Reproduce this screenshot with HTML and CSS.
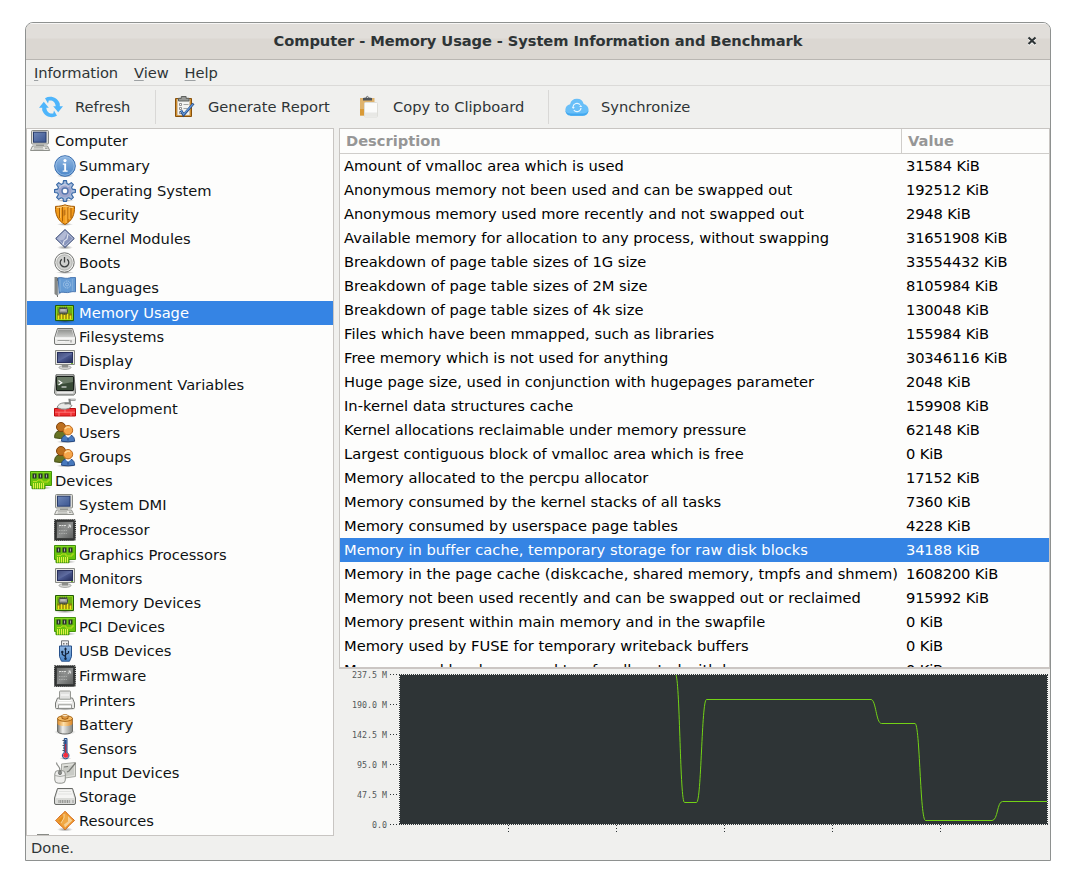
FILE: index.html
```html
<!DOCTYPE html>
<html lang="en">
<head>
<meta charset="utf-8">
<title>Computer - Memory Usage - System Information and Benchmark</title>
<link rel="stylesheet" href="styles.css">
</head>
<body>
<svg class="defs" width="0" height="0" aria-hidden="true">
<defs>
<linearGradient id="gScreen" x1="0" y1="0" x2="1" y2="1"><stop offset="0" stop-color="#7088b8"/><stop offset="1" stop-color="#3a5590"/></linearGradient>
<linearGradient id="gDark" x1="0" y1="0" x2="1" y2="1"><stop offset="0" stop-color="#262f60"/><stop offset=".5" stop-color="#4c5a92"/><stop offset="1" stop-color="#222b58"/></linearGradient>
<linearGradient id="gBlue" x1="0" y1="0" x2="0" y2="1"><stop offset="0" stop-color="#92b8e2"/><stop offset="1" stop-color="#4a86c8"/></linearGradient>
<linearGradient id="gDrive" x1="0" y1="0" x2="0" y2="1"><stop offset="0" stop-color="#8f918e"/><stop offset="1" stop-color="#d0d1cf"/></linearGradient>
<linearGradient id="gChip" x1="0" y1="0" x2="1" y2="1"><stop offset="0" stop-color="#6a6c6b"/><stop offset=".5" stop-color="#8b8d8c"/><stop offset="1" stop-color="#5c5e5d"/></linearGradient>
<linearGradient id="gBat" x1="0" y1="0" x2="1" y2="0"><stop offset="0" stop-color="#7b7d7a"/><stop offset=".35" stop-color="#efefed"/><stop offset="1" stop-color="#858783"/></linearGradient>
<linearGradient id="gOr" x1="0" y1="0" x2="1" y2="0"><stop offset="0" stop-color="#db8b2a"/><stop offset=".4" stop-color="#ffe0a8"/><stop offset="1" stop-color="#d98422"/></linearGradient>
<radialGradient id="gShade"><stop offset="0" stop-color="#000" stop-opacity=".4"/><stop offset="1" stop-color="#000" stop-opacity="0"/></radialGradient>

<symbol id="computer" viewBox="0 0 22 22">
<rect x="1.500" y=".5" width="17" height="13.500" rx="1" fill="#dcdcd6" stroke="#888a85"/>
<rect x="3.500" y="2.200" width="12.500" height="10" fill="url(#gScreen)" stroke="#283c6c"/>
<path d="M6 14.500h8v2H6z" fill="#9a9b96"/>
<path d="M2.500 16h15l2.200 4.500H.5z" fill="#e8e8e4" stroke="#8f918c"/>
<path d="M4 17.700h9M3.500 19.200h10" stroke="#a3a59f" stroke-width=".8"/><path d="M15 18.200h2.500" stroke="#888a85"/>
</symbol>
<symbol id="summary" viewBox="0 0 22 22">
<ellipse cx="11" cy="20.900" rx="9" ry="1.200" fill="url(#gShade)"/>
<circle cx="11" cy="11" r="10.300" fill="url(#gBlue)" stroke="#3b6eae"/><circle cx="11" cy="11" r="9.200" fill="none" stroke="#9dc1e7" stroke-width=".8"/>
<circle cx="11" cy="5.600" r="1.600" fill="#fff"/><path d="M8.800 8.400h3.300v7h1.500v1.400H8.700v-1.400h1.500V9.800H8.800z" fill="#fff"/>
</symbol>
<symbol id="os" viewBox="0 0 22 22">
<ellipse cx="11" cy="20.600" rx="9" ry="1.400" fill="url(#gShade)"/>
<path d="M9.500.6h3l.5 3 1.800.8 2.500-1.800 2.100 2.100-1.800 2.500.7 1.900 3.100.5v2.900l-3.100.5-.7 1.800 1.800 2.600-2.100 2-2.500-1.700-1.800.7-.5 3h-3l-.5-3-1.800-.7-2.500 1.700-2.100-2 1.800-2.600-.7-1.800-3.100-.5V9.600l3.100-.5.7-1.900-1.800-2.500 2.100-2.100 2.500 1.800L9 3.600z" fill="#a3b8da" stroke="#3465a4" stroke-width="1.100" stroke-linejoin="round"/>
<circle cx="11" cy="11" r="6.300" fill="#9fa6cd"/><circle cx="11" cy="11" r="3" fill="#fff" stroke="#5576ad" stroke-width="1.400"/><path d="M5.500 8c2-3.500 7-4.500 9-1" fill="none" stroke="#d6dbea"/>
</symbol>
<symbol id="security" viewBox="0 0 22 22">
<ellipse cx="11" cy="20.400" rx="8" ry="1.500" fill="url(#gShade)"/>
<path d="M1.500 2.400C6 2.400 9 1.500 11 .8c2 .7 5 1.600 9.500 1.600.3 8-2 14-9.500 18.100C3.500 16.400 1.200 10.400 1.500 2.400z" fill="#f39c1c" stroke="#a35a05"/>
<path d="M2.800 3.500c4 0 6.200-.7 8.200-1.400 2 .7 4.200 1.400 8.200 1.400" fill="none" stroke="#fdd58c"/>
<path d="M5.500 4v10M8.500 3v14.500M14 3v15M17 4v10" stroke="#a35a05" stroke-width=".9"/><path d="M6.500 4v10M12 3v16M15 4v11" stroke="#ffc15c" stroke-width=".8"/>
<path d="M9.500 6.500l2-1v5l-2 2z" fill="#a45c12" opacity=".6"/>
</symbol>
<symbol id="kernel" viewBox="0 0 22 22">
<ellipse cx="11" cy="19.500" rx="8" ry="2" fill="url(#gShade)"/>
<path d="M11 1.500l9.300 9-9.300 9-9.300-9z" fill="#8894bb" stroke="#3f4f78"/><path d="M11 3l7.800 7.500L11 18l-7.800-7.500z" fill="none" stroke="#bdc6df" stroke-width=".8"/>
<path d="M4 10.500L11 3.500l2 2-3 6-4 1z" fill="#c5cbe0" opacity=".7"/><path d="M14 6l-1 5-3 2-1 4" fill="none" stroke="#dfe3ef" stroke-width="1.200"/>
</symbol>
<symbol id="boots" viewBox="0 0 22 22">
<ellipse cx="11" cy="20.500" rx="9" ry="1.400" fill="url(#gShade)"/>
<circle cx="10.500" cy="10.500" r="9.700" fill="#f3f3f2" stroke="#6f716e"/><circle cx="10.500" cy="10.500" r="7.700" fill="#cfd0ce" stroke="#aeb0ac"/>
<path d="M7.800 7.200a4.300 4.300 0 1 0 5.400 0M10.500 5v5.500" fill="none" stroke="#3d4040" stroke-width="1.300"/>
</symbol>
<symbol id="languages" viewBox="0 0 22 22">
<path d="M.5 0h3v19L.5 17z" fill="#858784"/><path d="M3.500 1v19" stroke="#4b4e4d" stroke-width=".8"/><path d="M3.500 4v14.500l3-2V3z" fill="#b9c4d0"/>
<path d="M4 .9c4-1.200 6 .9 9.500.4 3-.4 4-1.600 8-.8v14.300c-4-.7-5 .7-8 .8-3.500.1-5.500-1.200-8 .5z" fill="#659bd4" stroke="#3465a4" stroke-width=".8"/>
<circle cx="13" cy="7.500" r="3.500" fill="none" stroke="#a7c8eb" stroke-width="1" stroke-dasharray="1.500 .6"/><circle cx="13" cy="7.500" r="1.500" fill="none" stroke="#a7c8eb" stroke-width=".8"/><path d="M6 2.500v12M18.500 2v12" stroke="#91b8e0" stroke-width="1.400" opacity=".6"/>
</symbol>
<symbol id="memory" viewBox="0 0 22 22">
<ellipse cx="11" cy="19.500" rx="11" ry="1.800" fill="url(#gShade)"/>
<path d="M1.500 3.500h18v15h-18z" fill="#6cae12" stroke="#245c04"/><path d="M2.500 4.500h16v13h-16z" fill="none" stroke="#8fd823"/>
<path d="M3 11.500h15V17H3z" fill="#88810b"/><path d="M4.500 13.500v4M7.500 12v5.500M10.500 13v4.500M13.500 12v5.500M16.500 13.500v4" stroke="#f6e51b" stroke-width="1.600"/>
<rect x="5" y="6.500" width="8.500" height="4.500" rx="1" fill="#9a9c99" stroke="#454847"/><path d="M5.500 5.500h8M5.500 11.800h8" stroke="#464947" stroke-dasharray="1.200 .9" stroke-width="1.400"/><path d="M6.500 8h5" stroke="#d5d6d3"/>
</symbol>
<symbol id="filesystem" viewBox="0 0 22 22">
<path d="M3.500 2.500h15l3 9.500v5q0 1.500-1.500 1.500H2q-1.500 0-1.500-1.500v-5z" fill="#ececea" stroke="#737572"/><path d="M4.300 3.500h13.400l2.500 8H1.800z" fill="url(#gDrive)"/><path d="M1 12h20M4 15h7" stroke="#fff"/><path d="M3.500 14.500h12" stroke="#9d9f9c"/><path d="M17 14v2.500" stroke="#888"/>
</symbol>
<symbol id="display" viewBox="0 0 22 22">
<ellipse cx="11" cy="17.500" rx="6" ry="1.900" fill="#d8d8d5" stroke="#a3a5a2"/><path d="M8 14.500h6v3H8z" fill="#8b8d89"/>
<path d="M1.500.5h19v14h-19z" fill="#e6e6e2" stroke="#888a85"/><rect x="3.500" y="2.500" width="15" height="10" fill="url(#gDark)" stroke="#28305d"/><path d="M4 11.500L18 4V3H4z" fill="#97a4cc" opacity=".25"/>
<path d="M17 13.500h2" stroke="#73b234"/>
</symbol>
<symbol id="env" viewBox="0 0 22 22">
<path d="M2 .8h18l1.500 18.500-1.800 1.700H2.300L.5 19.300z" fill="#c5c6c3" stroke="#5d605d"/><rect x="2.500" y="2.500" width="17" height="14" rx=".5" fill="#394b36" stroke="#181e19"/>
<path d="M3 3h16v5L3 11z" fill="#93a38d" opacity=".55"/><path d="M4.500 6.500l3.200 2.200-3.200 2.200M7.500 13h5" fill="none" stroke="#fff" stroke-width="1.200"/><path d="M3 18.800h16" stroke="#f3f3f3" stroke-width="1.200"/>
</symbol>
<symbol id="development" viewBox="0 0 22 22">
<path d="M.5 10.500h21v7.500H.5z" fill="#ef3033" stroke="#b90b0b"/><path d="M1 14.200h20M5 14.200v4M11 10.500v4M17 14.200v4" stroke="#ff8885" stroke-width=".8"/>
<path d="M3 9.500q1.500-4.500 7.500-4.700 5 0 7.500 2.800-2 3.400-6 3.500-5 .7-9-1.600z" fill="#e7e8e6" stroke="#858785"/><path d="M10.500 5.500l5.500-.5-.5-3.200h6" fill="none" stroke="#7d7f7d" stroke-width="2"/><path d="M16.500 1.600h4.500" stroke="#d8d8d8" stroke-width=".8"/>
</symbol>
<symbol id="users" viewBox="0 0 22 22">
<ellipse cx="12" cy="19.900" rx="10" ry="1.300" fill="url(#gShade)"/>
<path d="M.7 15.800c-.3-5 2-7 6-7 4 0 6 2 6 7q-6 1.500-12 0z" fill="#687425" stroke="#434c15"/><circle cx="7" cy="5" r="4.500" fill="#bd701f" stroke="#81430b"/>
<path d="M7.600 19.300c-.3-4.500 2-6.300 6.500-6.300s6.500 1.800 6.500 6.300q-6.500 1-13 0z" fill="#4779bd" stroke="#274a83"/><path d="M11.500 13.500l2.600 2.500 2.800-2.500v-2h-5z" fill="#fff"/><circle cx="14" cy="8.200" r="4.700" fill="#f6a64b" stroke="#bd681a"/><path d="M11 7q2-3 5-1.500" stroke="#ffd795" stroke-width="1.500" fill="none"/><path d="M14 15.500v3" stroke="#234680"/>
</symbol>
<symbol id="pci" viewBox="0 0 22 22">
<ellipse cx="12" cy="17.800" rx="10" ry="1.800" fill="url(#gShade)"/>
<path d="M.5 1.500h21v14h-6.500v3.200H2v-3.200H.5z" fill="#68c40c" stroke="#42920a"/><path d="M1 2.500h20" stroke="#8be02a" stroke-width=".8"/><path d="M3.500 13v5.500M5.500 13v5.500M7.500 13v5.500M9.500 13v5.500M11.500 13v5.500M13.500 13v5.500" stroke="#e3ee4a"/>
<path d="M2.500 3.500h4v5h-4zM8.500 3.500h4v5h-4zM14.500 3.500h4v5h-4z" fill="#2a332b"/><path d="M4.500 4.500v3M10.500 4.500v3M16.500 4.500v3" stroke="#a5aba2" stroke-width="1"/><path d="M3 11.500h4l1-1.500h4v2h6V10h2" fill="none" stroke="#c3df22" stroke-width=".9"/>
</symbol>
<symbol id="processor" viewBox="0 0 22 22">
<rect x="-.5" y="-.2" width="22.500" height="22.500" rx="2.800" fill="#303232"/><rect x="0" y=".3" width="21.500" height="21.500" rx="2.300" fill="none" stroke="#c9cac7" stroke-width="1.200" stroke-dasharray="1 1.050"/>
<rect x="2.500" y="2.500" width="17" height="17" rx="1" fill="url(#gChip)" stroke="#3b3d3c"/><path d="M5 6.500h7M14.500 6h2v3M16.500 6L14 8.500" stroke="#dcdddb" stroke-width="1.200" stroke-dasharray="2 .5" fill="none"/><path d="M5 8h7M5 11.500h8M5 14.500h8" stroke="#b8bab8" stroke-width=".8" stroke-dasharray="1 .7"/>
</symbol>
<symbol id="usb" viewBox="0 0 22 22">
<path d="M7.500.8h7v6h-7z" fill="#eee" stroke="#73767a"/><path d="M9 3h1.500v1.500H9zM12 3h1.500v1.500H12z" fill="#777"/>
<path d="M5.500 6h12v10.500l-2 4.700h-8l-2-4.700z" fill="url(#gBlue)" stroke="#26508b"/><path d="M11.500 8v11M11.500 16.500l-3.200-2v-2.500M11.500 14.500l3-1.500V11" fill="none" stroke="#14243d" stroke-width="1.200"/><path d="M10 9.500l1.500-2.300L13 9.500z" fill="#14243d"/><circle cx="8.300" cy="12" r="1.200" fill="#14243d"/><circle cx="11.500" cy="18.700" r="1.200" fill="#14243d"/>
</symbol>
<symbol id="printer" viewBox="0 0 22 22">
<ellipse cx="11" cy="19" rx="11" ry="1.600" fill="url(#gShade)"/>
<path d="M3.500 8h15l2 5v4.500q0 1-1 1h-17q-1 0-1-1V13z" fill="#e9e9e7" stroke="#777975"/><path d="M5.500 1.700q0-.7.700-.7h9.600q.7 0 .7.700v7.500h-11z" fill="#e0e1df" stroke="#969893"/><path d="M4.500 10.500h13M4 12.500h14" stroke="#fff"/><path d="M4.500 18.300v-3.500h13v3.500z" fill="#fff" stroke="#858783" stroke-width=".8"/><path d="M7 5h8" stroke="#fff"/>
</symbol>
<symbol id="battery" viewBox="0 0 22 22">
<ellipse cx="11" cy="18" rx="11" ry="3" fill="url(#gShade)"/>
<path d="M3.500 4.500v12.500c0 4 15 4 15 0V4.500z" fill="url(#gBat)" stroke="#6c6e6b"/><path d="M3.500 4.500v5c0 3.500 15 3.500 15 0v-5z" fill="url(#gOr)"/><ellipse cx="11" cy="4.500" rx="7.500" ry="2.800" fill="#f6bd67" stroke="#a66312"/><path d="M8 2v2.500q3 1.500 6 0V2z" fill="#eba54c" stroke="#9a5910"/><ellipse cx="11" cy="1.700" rx="3" ry="1.200" fill="#fff0d0" stroke="#bb741f" stroke-width=".8"/>
</symbol>
<symbol id="sensor" viewBox="0 0 22 22">
<ellipse cx="11.500" cy="20.400" rx="6" ry="1.500" fill="url(#gShade)"/>
<path d="M10.300.5H13v14a3.300 3.300 0 1 1-2.700 0z" fill="#b9cbe4" stroke="#244b82"/><path d="M11.700 2v14" stroke="#244c91" stroke-width="1.600"/><path d="M11.700 6v11" stroke="#cf2438"/><circle cx="11.700" cy="17.300" r="2.500" fill="#f52d3d"/><path d="M8.500 2.500h2M9 5h1.500M8.500 7.500h2M9 10h1.500M8.500 12.500h2" stroke="#3a4559" stroke-width=".9"/>
</symbol>
<symbol id="input" viewBox="0 0 22 22">
<path d="M7.500 2l14-1.500v14l-14 2z" fill="#dedfda" stroke="#a6a8a3"/><path d="M9 4.500L20 3v10L9 14.500z" fill="#c9cbc6"/><path d="M21.500 1L15 9l-2 1M10 5l4-.5" stroke="#767873" fill="none" stroke-width="1.200"/>
<path d="M2.500.5c0 4 4 3 3.500 8.500" stroke="#8c8e8a" fill="none" stroke-width="1.200"/><path d="M.8 12q0-3.500 3.500-3.500h3.500q3.500 0 3.500 3.500v6q0 3.200-3.500 3.200H4.300Q.8 21.200.8 18z" fill="#eeeeec" stroke="#92948f"/><path d="M1 13.500q5 2 10 0" fill="none" stroke="#a7a9a5"/><ellipse cx="6" cy="10.700" rx="1.600" ry="2" fill="#8b8d89" stroke="#626461" stroke-width=".7"/>
</symbol>
<symbol id="storage" viewBox="0 0 22 22">
<path d="M3.500 2.500h15l3 9.500v5q0 1.500-1.500 1.500H2q-1.500 0-1.500-1.500v-5z" fill="#dadbd8" stroke="#686a67"/><path d="M4.300 3.500h13.400l2.500 8.500H1.800z" fill="#f5f5f4"/><path d="M5 5.500h12M4 8h14" stroke="#e1e2e0"/><path d="M4.500 15.500h12" stroke="#90928f" stroke-width="3" stroke-dasharray="1 .7"/><path d="M19 14v3" stroke="#999"/>
</symbol>
<symbol id="resources" viewBox="0 0 22 22">
<ellipse cx="11" cy="19.500" rx="8" ry="2" fill="url(#gShade)"/>
<path d="M11 1.200l9.500 9.300-9.500 9.300-9.500-9.300z" fill="#ee9930" stroke="#cc5706" stroke-dasharray="1.200 .4"/><path d="M11 3.200l7.300 7.300-7.300 7-7.300-7z" fill="#f0a845"/><path d="M14 6l4.300 4.500-7.300 7-1-3 4-3z" fill="#f6d096"/><path d="M4 10.500L10 5l-1 5-2 3z" fill="#e38e1e"/><path d="M10 4v4l-3 5" fill="none" stroke="#fbdfb0" stroke-width=".8"/>
</symbol>
</defs>
</svg>

<main class="window">
<header class="titlebar"><h1>Computer - Memory Usage - System Information and Benchmark</h1>
<svg class="close" width="10" height="10" viewBox="0 0 10 10"><path d="M1.500 2.500L8.500 9M8.500 2.500L1.500 9" stroke="#fff" stroke-width="2"/><path d="M1.500 1.500L8.500 8M8.500 1.500L1.500 8" stroke="#2e3436" stroke-width="2.100"/></svg></header>
<nav class="menubar"><span><u>I</u>nformation</span><span><u>V</u>iew</span><span><u>H</u>elp</span></nav>
<div class="toolbar">
<button class="tool refresh"><svg width="24" height="22" viewBox="0 0 24 22"><g fill="#4eb5fb"><path d="M6 2.200C11.500-.8 18.500 1.300 20.800 7.800v2.500H24l-4.800 6-5-6h2.500C16.300 6 13.500 4 9.800 4.600L9 7.500z"/><path d="M18 19.800C12.500 22.800 5.500 20.700 3.200 14.200v-2.500H0l4.800-6 5 6H7.300c.4 4.300 3.200 6.300 6.900 5.700l.8-2.900z"/></g></svg><span>Refresh</span></button>
<i class="sep"></i>
<button class="tool report"><svg width="22" height="24" viewBox="0 0 22 24"><path d="M2.500 3.500h16v18h-16z" fill="#cf8d2e" stroke="#87500b" stroke-linejoin="round"/><path d="M4.500 4.500h12v15.500h-12z" fill="#f4f4f2" stroke="#c5c6c4" stroke-width=".5"/><path d="M5.500 6V3.300h2.800V1.500h4.800v1.800H16V6z" fill="#989a97" stroke="#5f625f"/><path d="M6.500 8.500h2v2h-2zM6.500 12.500h2v2h-2zM6.500 16.500h2v2h-2z" fill="#fff" stroke="#777" stroke-width=".8"/><path d="M10.500 9.500h5M10.500 13.500h4M10 17.500h4" stroke="#a3a5a3"/><path d="M8 15.500l2.500 4.500L20.500 8.500" fill="none" stroke="#244b88" stroke-width="2.600"/><path d="M8 15.500l2.500 4L20 9" fill="none" stroke="#6195d5" stroke-width="1.200"/></svg><span>Generate Report</span></button>
<button class="tool copy"><svg width="20" height="24" viewBox="0 0 20 24"><path d="M1 3h14.500v17.500H1z" fill="#dfb36d"/><path d="M1 14h5v6.500H1z" fill="#d99a37"/><path d="M4 5.500V3l3-.5q1.300-3.300 2.800 0L13 3v2.500z" fill="#50555a"/><circle cx="8.500" cy="2.300" r=".8" fill="#ddd"/><rect x="5.500" y="7.500" width="13" height="14.500" rx="1" fill="#fbfbfa" stroke="#deded9"/><path d="M6 17.500h12v4H6z" fill="#e8e8e5"/></svg><span>Copy to Clipboard</span></button>
<i class="sep"></i>
<button class="tool sync"><svg width="24" height="20" viewBox="0 0 24 20"><path d="M6 18.700a5.800 5.800 0 0 1-.9-11.500A7 7 0 0 1 18.700 7a5.900 5.900 0 0 1-.7 11.700z" fill="#69bff8"/><path d="M.3 13.500c.8 2 2.500 3 5 3h13c2.500 0 4.300-1 5.200-3-.3 3.500-2.800 5.200-5.500 5.200H6c-2.700 0-5.300-1.700-5.700-5.200z" fill="#42a8ef"/><path d="M8 10a4 4 0 0 1 7-2.300M16 11a4 4 0 0 1-7.200 2" fill="none" stroke="#e8f6ff" stroke-width="1.200"/><path d="M6.800 10h3L8.200 12zM14.200 10h3l-1.500-2z" fill="#e8f6ff"/></svg><span>Synchronize</span></button>
</div>
<div class="panes">
<ul class="tree">
<li class="root tall"><svg><use href="#computer"/></svg>Computer</li>
<li class="tall"><svg><use href="#summary"/></svg>Summary</li>
<li><svg><use href="#os"/></svg>Operating System</li>
<li><svg><use href="#security"/></svg>Security</li>
<li><svg><use href="#kernel"/></svg>Kernel Modules</li>
<li class="tall"><svg><use href="#boots"/></svg>Boots</li>
<li class="tall"><svg><use href="#languages"/></svg>Languages</li>
<li class="selected"><svg><use href="#memory"/></svg>Memory Usage</li>
<li><svg><use href="#filesystem"/></svg>Filesystems</li>
<li><svg><use href="#display"/></svg>Display</li>
<li><svg><use href="#env"/></svg>Environment Variables</li>
<li><svg><use href="#development"/></svg>Development</li>
<li><svg><use href="#users"/></svg>Users</li>
<li><svg><use href="#users"/></svg>Groups</li>
<li class="root"><svg><use href="#pci"/></svg>Devices</li>
<li class="tall"><svg><use href="#computer"/></svg>System DMI</li>
<li class="tall"><svg><use href="#processor"/></svg>Processor</li>
<li><svg><use href="#pci"/></svg>Graphics Processors</li>
<li><svg><use href="#display"/></svg>Monitors</li>
<li><svg><use href="#memory"/></svg>Memory Devices</li>
<li><svg><use href="#pci"/></svg>PCI Devices</li>
<li class="tall"><svg><use href="#usb"/></svg>USB Devices</li>
<li class="tall"><svg><use href="#processor"/></svg>Firmware</li>
<li><svg><use href="#printer"/></svg>Printers</li>
<li><svg><use href="#battery"/></svg>Battery</li>
<li><svg><use href="#sensor"/></svg>Sensors</li>
<li><svg><use href="#input"/></svg>Input Devices</li>
<li><svg><use href="#storage"/></svg>Storage</li>
<li><svg><use href="#resources"/></svg>Resources</li>
<li class="peek"></li>
</ul>
<section class="content">
<div class="table">
<div class="row head"><span>Description</span><span>Value</span></div>
<div class="row"><span>Amount of vmalloc area which is used</span><span>31584 KiB</span></div>
<div class="row"><span>Anonymous memory not been used and can be swapped out</span><span>192512 KiB</span></div>
<div class="row"><span>Anonymous memory used more recently and not swapped out</span><span>2948 KiB</span></div>
<div class="row"><span>Available memory for allocation to any process, without swapping</span><span>31651908 KiB</span></div>
<div class="row"><span>Breakdown of page table sizes of 1G size</span><span>33554432 KiB</span></div>
<div class="row"><span>Breakdown of page table sizes of 2M size</span><span>8105984 KiB</span></div>
<div class="row"><span>Breakdown of page table sizes of 4k size</span><span>130048 KiB</span></div>
<div class="row"><span>Files which have been mmapped, such as libraries</span><span>155984 KiB</span></div>
<div class="row"><span>Free memory which is not used for anything</span><span>30346116 KiB</span></div>
<div class="row"><span>Huge page size, used in conjunction with hugepages parameter</span><span>2048 KiB</span></div>
<div class="row"><span>In-kernel data structures cache</span><span>159908 KiB</span></div>
<div class="row"><span>Kernel allocations reclaimable under memory pressure</span><span>62148 KiB</span></div>
<div class="row"><span>Largest contiguous block of vmalloc area which is free</span><span>0 KiB</span></div>
<div class="row"><span>Memory allocated to the percpu allocator</span><span>17152 KiB</span></div>
<div class="row"><span>Memory consumed by the kernel stacks of all tasks</span><span>7360 KiB</span></div>
<div class="row"><span>Memory consumed by userspace page tables</span><span>4228 KiB</span></div>
<div class="row selected"><span>Memory in buffer cache, temporary storage for raw disk blocks</span><span>34188 KiB</span></div>
<div class="row"><span>Memory in the page cache (diskcache, shared memory, tmpfs and shmem)</span><span>1608200 KiB</span></div>
<div class="row"><span>Memory not been used recently and can be swapped out or reclaimed</span><span>915992 KiB</span></div>
<div class="row"><span>Memory present within main memory and in the swapfile</span><span>0 KiB</span></div>
<div class="row"><span>Memory used by FUSE for temporary writeback buffers</span><span>0 KiB</span></div>
<div class="row"><span>Memory used by shmem and tmpfs, allocated with huge pages</span><span>0 KiB</span></div>
</div>
<svg class="chart" width="711" height="166" viewBox="339 669 711 166">
<rect x="400" y="675" width="647" height="149" fill="#2e3436"/>
<g stroke="#2e3436" stroke-width="1" stroke-dasharray="1 1" fill="none">
<path d="M399 674.500H1048M399 824.500H1048M399.500 675V825M1047.500 675V825"/>
</g>
<g stroke="#2e3436" stroke-dasharray="1 2">
<path d="M390 674.500h8M390 704.500h8M390 734.500h8M390 764.500h8M390 794.500h8M390 824.500h8M508.500 825v7M616.500 825v7M724.500 825v7M832.500 825v7M940.500 825v7"/>
</g>
<g class="ticks" text-anchor="end"><text x="387" y="678">237.5 M</text><text x="387" y="708">190.0 M</text><text x="387" y="738">142.5 M</text><text x="387" y="768">95.0 M</text><text x="387" y="798">47.5 M</text><text x="387" y="828">0.0</text></g>
<path d="M676 675C680 685 680 802.500 684.500 802.500H696.500C701.500 802.500 701.500 699.500 706.500 699.500H871C876 699.500 876 723.500 881.500 723.500H915C920 723.500 920 820.500 925.500 820.500H992C998 820.500 997 801.500 1002.500 801.500H1047" fill="none" stroke="#73d216"/>
</svg>
</section>
</div>
<footer class="status">Done.</footer>
</main>
</body>
</html>
```

FILE: styles.css
```css
* { box-sizing: border-box; }
body {
  margin: 0;
  padding: 22px 25px 28px;
  background: #fff;
  font-family: "DejaVu Sans", sans-serif;
  font-size: 14.667px;
  color: #2e3436;
}
.defs { display: block; }
.window {
  width: 1026px;
  height: 839px;
  border: 1px solid #8e9190;
  border-radius: 8px 8px 0 0;
  background: #f0f0ee;
  display: flex;
  flex-direction: column;
  overflow: hidden;
}
.titlebar {
  height: 37px;
  flex: none;
  display: grid;
  grid-template-columns: 37px 1fr 37px;
  align-items: center;
  background: linear-gradient(#e1deda 0 14px, #dbd7d2 15px);
  border-top: 1px solid #f7f6f5;
  border-bottom: 1px solid #b9b6b2;
}
.titlebar h1 {
  grid-column: 2;
  margin: 0;
  padding-bottom: 2px;
  font-size: 14.667px;
  line-height: 20px;
  letter-spacing: -0.085px;
  text-align: center;
  white-space: nowrap;
}
.close { justify-self: center; margin-bottom: 1px; }
.menubar {
  height: 26px;
  flex: none;
  padding: 0 8px;
  display: flex;
  gap: 16px;
  line-height: 26px;
  letter-spacing: -0.07px;
  border-bottom: 1px solid #dbdad8;
}
.menubar u {
  text-decoration-color: #9da1a3;
  text-underline-offset: 2px;
}
.toolbar {
  height: 42px;
  flex: none;
  display: flex;
  align-items: center;
}
.tool {
  border: 0;
  padding: 0;
  background: none;
  font: inherit;
  color: inherit;
  height: 42px;
  display: flex;
  align-items: center;
  gap: 12px;
  white-space: nowrap;
}
.tool span { padding-bottom: 2px; }
.refresh { width: 116px; margin-left: 13px; }
.report { width: 186px; margin-left: 17px; gap: 13px; }
.copy { width: 189px; gap: 14px; }
.sync { margin-left: 16px; }
.sep { width: 1px; height: 34px; background: #d9d8d6; }
.panes { height: 708px; flex: none; display: flex; gap: 5px; }
.tree {
  width: 308px;
  margin: 0;
  padding: 0;
  list-style: none;
  background: #fdfdfc;
  border: 1px solid #c8c5c2;
  overflow: hidden;
  color: #101314;
}
.tree li {
  height: 24px;
  line-height: 24px;
  padding-left: 27px;
  display: flex;
  gap: 3px;
  white-space: nowrap;
}
.tree li.root { padding-left: 3px; }
.tree li.tall { height: 25px; }
.tree li svg { width: 22px; height: 22px; margin-top: 1px; flex: none; overflow: visible; }
.tree symbol { overflow: visible; }
.tree li.selected { background: #3584e4; color: #fff; }
.tree li.peek {
  height: 1px;
  width: 12px;
  margin: 1px 0 0 10px;
  padding: 0;
  background: #888a85;
}
.content { width: 711px; }
.table {
  height: 541px;
  border: 1px solid #c8c5c2;
  border-bottom: 2px solid #cbc6c3;
  background: #fdfdfc;
  overflow: hidden;
  color: #000;
}
.row {
  display: grid;
  grid-template-columns: 562px 1fr;
  height: 24px;
  line-height: 24px;
  white-space: nowrap;
}
.row span { padding-left: 4px; letter-spacing: 0.02px; }
.row span + span { letter-spacing: -0.14px; }
.row.selected { background: #3584e4; color: #fff; }
.row.head {
  height: 25px;
  color: #969696;
  font-weight: bold;
  border-bottom: 1px solid #cfcdca;
}
.row.head span { padding-left: 6px; letter-spacing: 0; }
.row.head span:first-child { border-right: 1px solid #cfcdca; }
.chart { display: block; }
.ticks { font-family: "DejaVu Sans Mono", monospace; font-size: 8.3px; fill: #53585a; }
.status { padding-left: 5px; line-height: 24px; letter-spacing: -0.05px; }
```
